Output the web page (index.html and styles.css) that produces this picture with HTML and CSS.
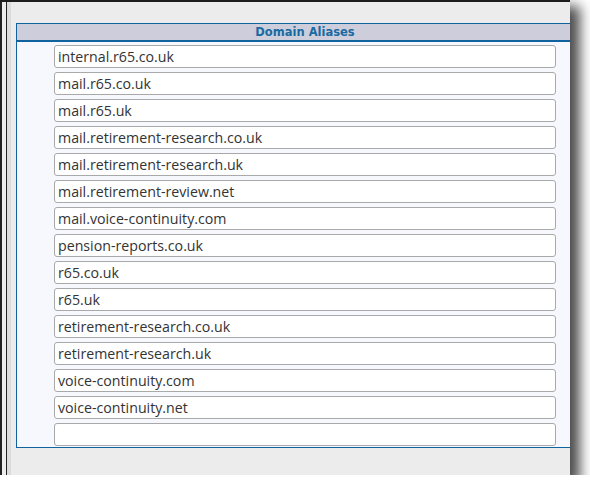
FILE: index.html
```html
<!DOCTYPE html>
<html>
<head>
<meta charset="utf-8">
<link rel="stylesheet" href="styles.css">
</head>
<body>
<div class="window">
  <div class="edge"></div>
  <div class="content">
    <div class="panel">
      <div class="panel-head">Domain Aliases</div>
      <div class="panel-body">
        <div class="field">internal.r65.co.uk</div>
        <div class="field">mail.r65.co.uk</div>
        <div class="field">mail.r65.uk</div>
        <div class="field">mail.retirement-research.co.uk</div>
        <div class="field">mail.retirement-research.uk</div>
        <div class="field">mail.retirement-review.net</div>
        <div class="field">mail.voice-continuity.com</div>
        <div class="field">pension-reports.co.uk</div>
        <div class="field">r65.co.uk</div>
        <div class="field">r65.uk</div>
        <div class="field">retirement-research.co.uk</div>
        <div class="field">retirement-research.uk</div>
        <div class="field">voice-continuity.com</div>
        <div class="field">voice-continuity.net</div>
        <div class="field"></div>
      </div>
    </div>
  </div>
</div>
</body>
</html>
```

FILE: styles.css
```css
html, body {
  margin: 0;
  padding: 0;
  background: #ffffff;
  overflow: hidden;
}

.window {
  width: 570px;
  height: 475px;
  box-sizing: border-box;
  border-top: 2px solid #1c1c1c;
  background: #ececec;
  display: flex;
  box-shadow: 8px 8px 12px 2px rgba(0, 0, 0, 0.7);
  overflow: hidden;
}

.edge {
  flex: 0 0 11px;
  background: linear-gradient(to right,
    #222 0, #222 2px,
    #ececec 2px, #ececec 6px,
    #222 6px, #222 7px,
    #dcdcdc 7px, #dcdcdc 11px);
}

.content {
  flex: 1;
  padding: 21px 0 0 5px;
  min-width: 0;
}

.panel {
  width: 578px;
  box-sizing: border-box;
  border: 1px solid #10639e;
  background: #f6f8fe;
}

.panel-head {
  height: 16px;
  background: #cdcddc;
  border-bottom: 2px solid #10639e;
  text-align: center;
  font-family: "DejaVu Sans", Verdana, sans-serif;
  font-weight: bold;
  font-size: 11.5px;
  line-height: 17px;
  color: #1a6aa2;
}

.panel-body {
  display: flex;
  flex-direction: column;
  gap: 4px;
  padding: 3px 37px 1px 37px;
}

.field {
  height: 23px;
  box-sizing: border-box;
  border: 1px solid #a9a9a9;
  border-radius: 3px;
  background: #ffffff;
  padding: 0 3px;
  font-family: "Open Sans", sans-serif;
  font-size: 14.2px;
  line-height: 21px;
  color: #333333;
  white-space: nowrap;
}
```
